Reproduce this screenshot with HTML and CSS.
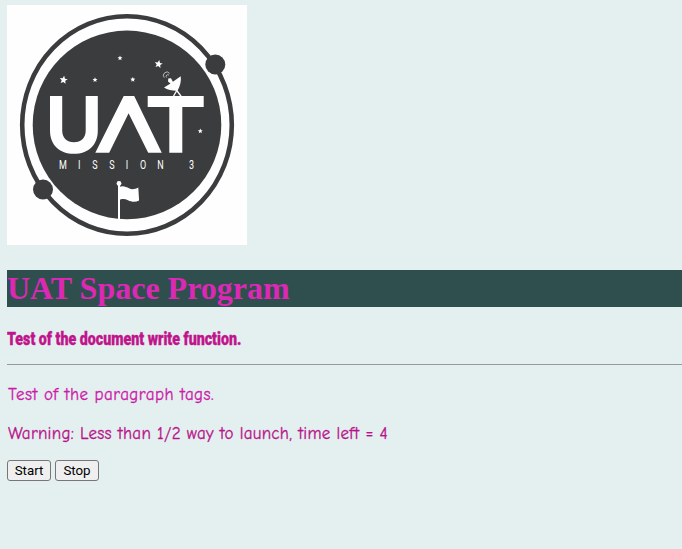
FILE: index.html
```html
<!DOCTYPE html>
<html lang="en">
<head>
<meta charset="utf-8">
<title>UAT Space Program</title>
<link rel="stylesheet" href="styles.css">
</head>
<body>
<svg class="logo" viewBox="7 5 240 240" role="img" aria-label="UAT Mission 3">
  <rect x="7" y="5" width="240" height="240" fill="#fefefe"/>
  <g fill="#3b3c3e">
    <ellipse cx="127" cy="125" rx="104.8" ry="108.8" fill="none" stroke="#3b3c3e" stroke-width="4.6"/>
    <circle cx="127" cy="124.9" r="94.3"/>
    <circle cx="215.3" cy="64.5" r="10"/>
    <circle cx="43" cy="189.5" r="10"/>
  </g>
  <defs>
    <path id="star" d="M0-4 1.2-1.3 4-1.2 1.8.8 2.5 3.6 0 2.1-2.5 3.6-1.8.8-4-1.2-1.2-1.3Z"/>
  </defs>
  <g fill="#fefefe">
    <use href="#star" transform="translate(63.6 79.8) rotate(8)"/>
    <use href="#star" transform="translate(158.6 64) rotate(10)"/>
    <use href="#star" transform="translate(120 58) scale(.62)"/>
    <use href="#star" transform="translate(95 79.8) scale(.62)"/>
    <use href="#star" transform="translate(132.8 79.4) scale(.62)"/>
    <use href="#star" transform="translate(200.3 131) scale(.62)"/>
    <path d="M50 96H62.2V130.5C62.2 138 67 142.3 74 142.3S85.7 138 85.7 130.5V96H97.8V130.5C97.8 145 88.5 153.8 74 153.8S50 145 50 130.5Z"/>
    <path d="M123.7 96H134.2L161.8 152.7H148.2L128.6 113.2 109.2 152.7H95.3Z"/>
    <path d="M147.7 96H203.7V107H182.3V152.7H169.3V107H147.7Z"/>
    <path d="M180.7 76.3C181.5 81 180 86.5 177.5 90.8 173 91 167.5 90 164 87.6L170.5 83.5 168 81.5 168.300 78.600 171 78.300 172.900 81.700Z"/>
    <path d="M173 97 176.8 90.5 181.6 97" fill="none" stroke="#fefefe" stroke-width="1.3"/>
    <path d="M164.2 77.6A3.4 3.4 0 0 1 169.5 73.3M166.6 77.5A1.6 1.6 0 0 1 169 75.2" fill="none" stroke="#d5d5d5" stroke-width=".8"/>
    <circle cx="119" cy="183.4" r="2.4"/>
    <path d="M118 184H120V219.500H118Z"/>
    <path d="M119 187.3C122 185 126 186.5 129 188.3 132 190 135.500 189 138.300 187.500L139.100 200.500C135.500 202.500 131.500 202 128 200.300 125 198.800 121.500 198.500 119 200.500Z"/>
  </g>
  <text class="mission" transform="scale(.75 1)" y="169" x="84 105.700 126.700 149.300 169.300 190.700 214 235 255.300">MISSION 3</text>
</svg>
<h1>UAT Space Program</h1>
<p class="notice"><span>Test of the document write function.</span></p>
<hr>
<p class="casual tags">Test of the paragraph tags.</p>
<p class="casual warning">Warning: Less than 1/2 way to launch, time left = 4</p>
<div class="controls"><button type="button">Start</button><button type="button">Stop</button></div>
</body>
</html>
```
FILE: styles.css
```css
html { overflow: hidden; }
body {
  margin: 5px 0 0 7px;
  background: #e4f0f0;
  font-family: "Liberation Serif", serif;
}
.logo { display: block; width: 240px; height: 240px; }
.mission {
  font: 400 12px Roboto, sans-serif;
  fill: #fff;
  text-anchor: middle;
}
h1 {
  margin: 25px 0 0;
  height: 37px;
  line-height: 37px;
  font-size: 32px;
  background: #2f4f4f;
  color: #dc28b4;
}
p { margin: 0; white-space: nowrap; }
.notice {
  margin-top: 22px;
  height: 20px;
  font: 900 17.5px/20px Roboto, sans-serif;
  color: #c0148c;
  -webkit-text-stroke: .4px #c0148c;
}
.notice span {
  display: inline-block;
  transform: scaleX(.813);
  transform-origin: 0 50%;
}
hr {
  margin: 15px 0 0;
  border: 0;
  height: 1px;
  background: #999;
}
.casual {
  height: 22px;
  padding-left: 1px;
  font: 17px/22px "Comic Sans MS", "Comic Neue", cursive;
  font-variant-ligatures: none;
}
.tags {
  margin-top: 19px;
  color: #cc1ba8;
  letter-spacing: .45px;
  -webkit-text-stroke: .3px #cc1ba8;
}
.warning {
  margin-top: 17px;
  color: #b8148a;
  letter-spacing: .27px;
  -webkit-text-stroke: .3px #b8148a;
}
.controls { display: flex; gap: 4px; margin-top: 15px; }
button {
  box-sizing: border-box;
  width: 44px;
  height: 21px;
  padding: 0;
  border: 1px solid #767676;
  border-radius: 3px;
  background: #efefef;
  color: #000;
  font: 13.333px/19px Roboto, "Liberation Sans", sans-serif;
}
```
